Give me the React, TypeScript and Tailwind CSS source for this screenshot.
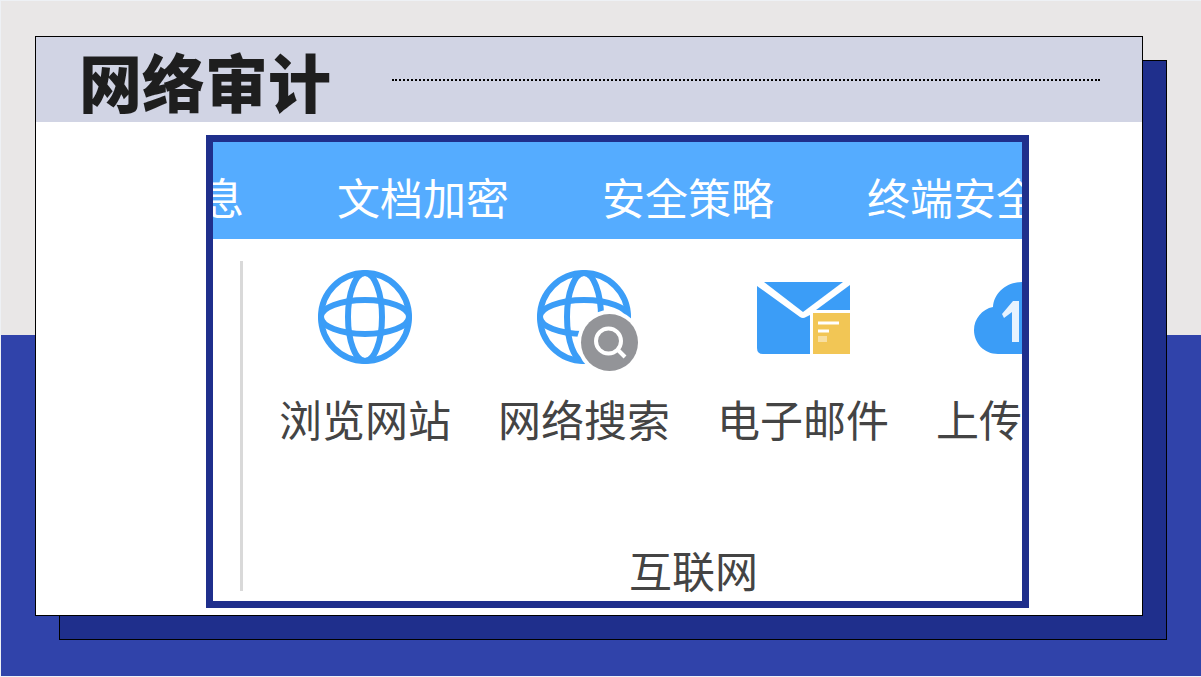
import React from "react";

const GlobeLines = () => (
  <g fill="none" stroke="#3b9df7" strokeWidth="6">
    <circle cx="48" cy="48" r="44" />
    <ellipse cx="48" cy="48" rx="17" ry="44" />
    <ellipse cx="48" cy="48" rx="44" ry="17" />
  </g>
);

const GlobeIcon = () => (
  <svg className="h-[104px] w-24" viewBox="0 0 96 104" aria-hidden="true">
    <GlobeLines />
  </svg>
);

const GlobeSearchIcon = () => (
  <svg className="h-[104px] w-24 overflow-visible" viewBox="0 0 96 104" aria-hidden="true">
    <GlobeLines />
    <circle cx="73.5" cy="73.5" r="32.5" fill="#fff" />
    <circle cx="73.5" cy="73.5" r="28.5" fill="#939498" />
    <g fill="none" stroke="#fff" strokeWidth="4">
      <circle cx="72.5" cy="72" r="12.5" />
      <path d="M81 80l8 8" />
    </g>
  </svg>
);

const MailIcon = () => (
  <svg className="h-[104px] w-24" viewBox="0 0 96 104" aria-hidden="true">
    <path d="M9 13h79L48 43z" fill="#3b9df7" />
    <path d="M2 17l43 31q3 2 6 0l4-2v39H8q-6 0-6-6z" fill="#3b9df7" />
    <path d="M95 16v25H61z" fill="#3b9df7" />
    <path d="M58 44h37v41H58z" fill="#f2c655" />
    <path d="M63 54h21M63 62h11" stroke="#fff" strokeWidth="3" />
    <path d="M63 70h9" stroke="#f8dfa0" strokeWidth="6" />
  </svg>
);

const CloudUploadIcon = () => (
  <svg className="h-[104px] w-24" viewBox="0 0 96 104" aria-hidden="true">
    <path
      d="M24 85C10 85 0 74 0 61c0-11 8-21 19-23C20 24 32 13 48 13s28 11 29 25c11 2 19 12 19 23 0 13-10 24-24 24z"
      fill="#3b9df7"
    />
    <path d="M38 73V43l-8 6-2-4 11-13h6v41z" fill="#e6f3ff" />
  </svg>
);

const tabs = ["文档加密", "安全策略", "终端安全"];

const tools = [
  { name: "浏览网站", icon: <GlobeIcon /> },
  { name: "网络搜索", icon: <GlobeSearchIcon /> },
  { name: "电子邮件", icon: <MailIcon /> },
  { name: "上传下载", icon: <CloudUploadIcon /> },
];

function Ribbon() {
  return (
    <div className="mt-[13px] mr-[113px] mb-[7px] ml-[170px] overflow-hidden border-[7px] border-[#1f2f8c] bg-white text-[43px] leading-[44px]">
      <nav className="flex gap-[93px] bg-[#55acff] pt-8 pb-[21px] text-white">
        <a href="#" className="flex w-[31px] shrink-0 justify-end overflow-hidden">
          息
        </a>
        {tabs.map((tab) => (
          <a key={tab} href="#" className="shrink-0 whitespace-nowrap">
            {tab}
          </a>
        ))}
      </nav>
      <div className="flex pt-[22px] pb-[10px] pl-[27px] text-[#444]">
        <div className="w-[3px] shrink-0 bg-[#d9d9d9]" />
        <section className="ml-[34px] flex h-[330px] shrink-0 flex-col items-center justify-between pt-2">
          <div className="flex gap-[43px]">
            {tools.map((tool) => (
              <button
                key={tool.name}
                type="button"
                className="flex w-44 shrink-0 flex-col items-center gap-[23px] whitespace-nowrap"
              >
                {tool.icon}
                <span>{tool.name}</span>
              </button>
            ))}
          </div>
          <h2>互联网</h2>
        </section>
      </div>
    </div>
  );
}

export default function App() {
  return (
    <main
      lang="zh-CN"
      className="min-h-screen border-y border-l border-[#eef1f5] bg-[linear-gradient(#e9e7e7_334px,#3043aa_334px)] pt-[35px] pr-[58px] pb-[60px] pl-[34px] font-['Noto_Sans_CJK_SC',sans-serif]"
    >
      <div className="border border-black bg-white shadow-[24px_24px_0_-1px_#1f2f8c,24px_24px_0_0_#000]">
        <header className="flex h-[85px] items-center gap-[61px] bg-[#d1d4e4] pr-[42px] pl-[43px]">
          <h1 className="shrink-0 text-[63px] leading-[64px] font-black text-[#1e1e1e]">
            网络审计
          </h1>
          <div className="grow border-t-2 border-dotted border-black" />
        </header>
        <Ribbon />
      </div>
    </main>
  );
}
